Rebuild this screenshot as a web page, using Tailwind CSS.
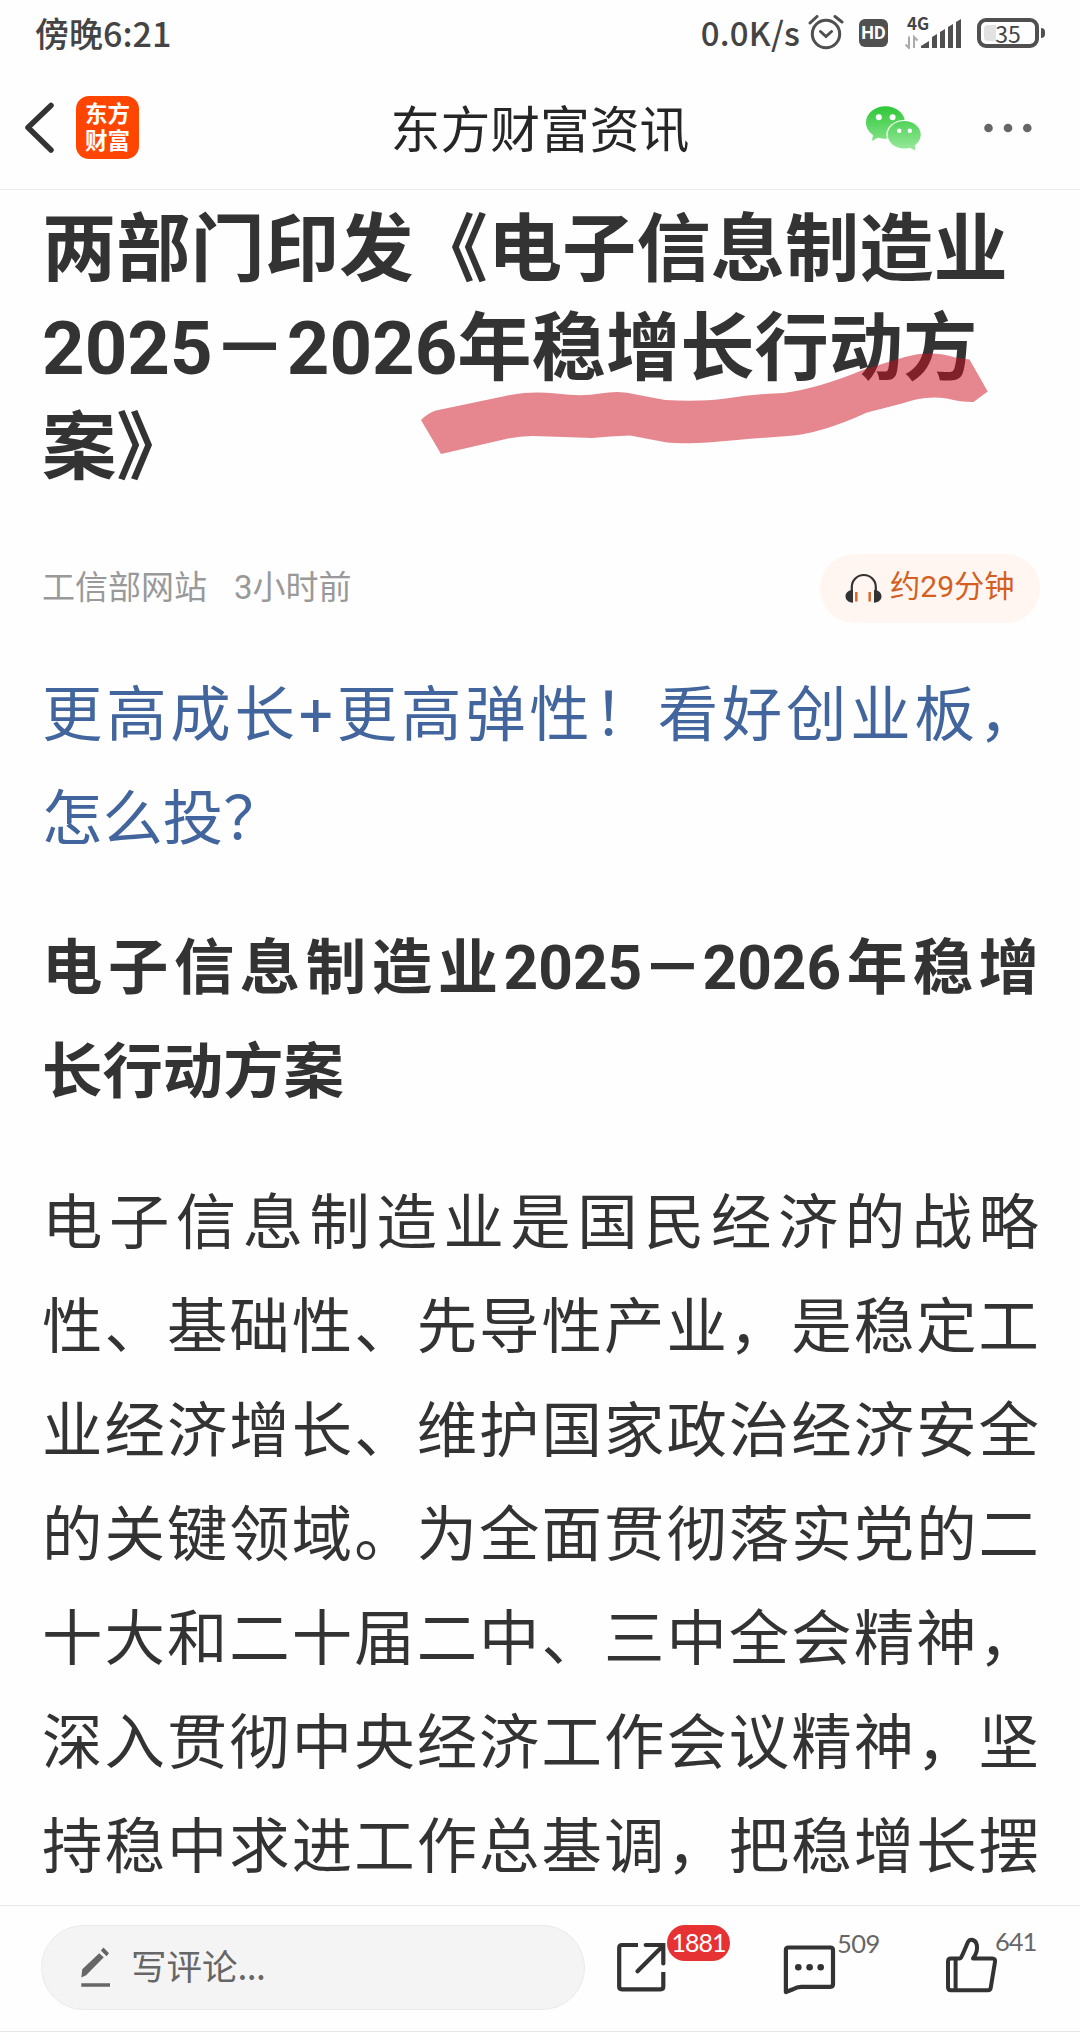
<!DOCTYPE html>
<html lang="zh-CN">
<head>
  <meta charset="UTF-8" />
  <title>东方财富资讯</title>
  <meta name="viewport" content="width=device-width, initial-scale=1.0" />
  <script src="https://cdn.jsdelivr.net/npm/@tailwindcss/browser@4"></script>
</head>
<body class="bg-[#fefefe] text-[#333] font-[Roboto,'Noto_Sans_CJK_SC',sans-serif]">
<div class="flex flex-col w-[1080px] h-[2040px] overflow-hidden">

  <!-- === STATUS BAR === -->
  <div class="flex items-center h-[66px] shrink-0 pl-[35px] pr-[35px] text-[#444] font-['Noto_Sans_CJK_SC',sans-serif] font-medium">
    <span class="text-[34px] leading-none">傍晚6:21</span>
    <span class="ml-auto pb-[2px] text-[33px] leading-none tracking-[0.2px]">0.0K/s</span>
    <svg class="ml-2 w-[36px] h-[36px]" viewBox="808 17 36 36" fill="none" stroke="#505050" stroke-width="3" stroke-linecap="round">
      <circle cx="826" cy="36" r="13.7" />
      <path d="M820.5 33.5l5.5 5 5.5-5M810 25l7-6.5M842 24l-7-5.500" />
    </svg>
    <span class="ml-[15px] flex items-center justify-center w-[29px] h-[28px] rounded-md bg-[#505050] text-white text-[18px] leading-none font-bold font-[Roboto,sans-serif]">HD</span>
    <div class="relative ml-[16px] w-[58px] h-[32px]">
      <span class="absolute left-[3px] top-0 text-[17px] leading-[12px] font-bold">4G</span>
      <svg class="w-[58px] h-[32px]" viewBox="904 16 58 32">
        <path d="M909 35.500v11.500l-3.500-3.500M914 47v-11l3.500 3.500" fill="none" stroke="#aaa" stroke-width="2" />
        <path d="M921 47v-2l8-5v7zM932 47v-11l5-3v14zM940 47v-16l5-3v19zM948 47v-21l5-3v24zM956 47v-26l5-3v29z" fill="#505050" />
      </svg>
    </div>
    <div class="ml-[15px] relative flex items-center justify-center w-[62px] h-[30px] border-4 border-[#505050] rounded-[9px]">
      <span class="absolute left-[3px] top-[3px] w-3 h-4 rounded-l-sm bg-[#e2e2e2]"></span>
      <span class="relative text-[23px] leading-none font-normal">35</span>
    </div>
    <span class="ml-[2px] w-[4px] h-[10px] rounded-r-sm bg-[#505050]"></span>
  </div>

  <!-- === NAV BAR === -->
  <div class="grid grid-cols-3 items-center h-[124px] shrink-0 border-b border-[#ebebeb] pl-[24px] pr-[48px]">
    <div class="flex items-center">
      <svg class="w-[32px] h-[54px]" viewBox="24 101 32 54" fill="none" stroke="#333" stroke-width="5.500" stroke-linecap="round" stroke-linejoin="round"><path d="M51 105.500L28 127.500l23 22.500" /></svg>
      <span class="ml-5 pb-[4px] flex flex-col items-center justify-center w-[63px] h-[63px] rounded-[13px] bg-[#ff4500] text-white text-[22.500px] leading-[27px] font-['Noto_Sans_CJK_SC',sans-serif]"><b>东方</b><b>财富</b></span>
    </div>
    <h1 class="ml-[12px] -mr-[12px] pt-[9px] text-center text-[49.800px] leading-none whitespace-nowrap text-[#262626]">东方财富资讯</h1>
    <div class="flex items-center justify-end">
      <svg class="w-[60px] h-[48px] mr-[60px]" viewBox="864 103 60 48">
        <defs><linearGradient id="wx" gradientUnits="userSpaceOnUse" x1="0" y1="105" x2="0" y2="149"><stop offset="0" stop-color="#2dc737" /><stop offset="1" stop-color="#98e99b" /></linearGradient></defs>
        <path d="M873.500 131l-1.500 9 8-4.500z" fill="url(#wx)" />
        <ellipse cx="885.400" cy="121.500" rx="19.500" ry="16.200" fill="url(#wx)" />
        <ellipse cx="904.200" cy="133.800" rx="17.800" ry="14.900" fill="#fefefe" />
        <path d="M908 146l7.500 3.500-1-7z" fill="url(#wx)" />
        <ellipse cx="904.200" cy="133.800" rx="16.500" ry="13.700" fill="url(#wx)" />
        <g fill="#fff"><circle cx="878.800" cy="116.300" r="3" /><circle cx="892.600" cy="116.300" r="3" /><circle cx="899.200" cy="129.700" r="2.200" /><circle cx="909.800" cy="129.700" r="2.200" /></g>
      </svg>
      <svg class="w-[48px] h-[10px]" viewBox="984 123 48 10" fill="#666"><circle cx="988.500" cy="128" r="4.300" /><circle cx="1008" cy="128" r="4.300" /><circle cx="1027.300" cy="128" r="4.300" /></svg>
    </div>
  </div>

  <!-- === ARTICLE === -->
  <div class="flex-1 min-h-0 overflow-hidden pl-[42px] pr-[41px] pt-[10px]">
    <div class="relative">
      <h2 class="text-[74.300px] leading-[99px] font-bold whitespace-nowrap">两部门印发《电子信息制造业<br />2025－2026年稳增长行动方<br />案》</h2>
      <!-- highlighter stroke -->
      <svg class="absolute left-[376px] top-[150px] w-[574px] h-[108px]" viewBox="418 350 574 108">
        <path fill="#cd0f1f" fill-opacity=".5" d="M421 420Q428 413 436 410.500L510 395Q532 391 556 393.500Q583 397 600 393.500Q621 390 636 394.500L665 400Q700 402 726 398.500Q755 394 784 393Q820 388 864 369.500Q885 363 905 357Q932 350 955 357.500L969.500 359.500L987.700 391.500L973.500 402Q960 402 947 398.500Q925 395 902 403.500L867 412.500Q820 434 788 436L747 439Q690 445 667 442.500L630 435.500Q610 436 592 438Q565 437 532 436Q520 436 508 438.500L441 454z" />
      </svg>
    </div>

    <div class="flex items-center h-[69px] mt-[57px]">
      <span class="pb-[2px] text-[33px] leading-none text-[#999]">工信部网站</span>
      <span class="ml-[27px] pb-[2px] text-[33px] leading-none text-[#999]">3小时前</span>
      <div class="ml-auto -mr-px flex items-center w-[220px] h-[69px] pl-[24px] rounded-full bg-[#fff5f1]">
        <svg class="w-[38px] h-[32px]" viewBox="844 573 38 32">
          <path d="M851.800 593v-6a12 12 0 0 1 24 0v6" fill="none" stroke="#333" stroke-width="2.200" />
          <path d="M853 590v12.700c-10 0-10-12.700 0-12.700zM874 590v12.700c10 0 10-12.700 0-12.700z" fill="#333" />
          <path d="M856.300 592v9.500M869.700 592v9.500" stroke="#d9682c" stroke-width="2.500" />
        </svg>
        <span class="ml-[8px] pb-[3px] text-[30.200px] leading-none text-[#d4601f]">约29分钟</span>
      </div>
    </div>

    <p class="mt-[41px] text-[60.400px] leading-[104px] text-justify text-[#41659c]">更高成长+更高弹性！看好创业板，怎么投？</p>
    <p class="mt-[45px] text-[60.400px] leading-[104px] text-justify font-bold">电子信息制造业2025－2026年稳增长行动方案</p>
    <p class="mt-[47px] text-[60.400px] leading-[104px] text-justify [text-align-last:justify]">电子信息制造业是国民经济的战略性、基础性、先导性产业，是稳定工业经济增长、维护国家政治经济安全的关键领域。为全面贯彻落实党的二十大和二十届二中、三中全会精神，深入贯彻中央经济工作会议精神，坚持稳中求进工作总基调，把稳增长摆</p>
  </div>

  <!-- === COMMENT BAR === -->
  <div class="flex items-start h-[127px] shrink-0 border-y border-[#e6e6e6] pl-[41px] pt-[19px] font-['Noto_Sans_CJK_SC',sans-serif] text-[#666]">
    <div class="flex items-center w-[544px] h-[85px] pl-[38px] rounded-full bg-[#f4f4f4] border border-[#eaeaea]">
      <svg class="w-[32px] h-[42px]" viewBox="80 1946 32 42" fill="#666"><path d="M81.300 1976.500l1-8.200 16.900-16 4.600 4-17.700 18zM103.500 1946.500l5.500 5.800-2.500 2.900-5.700-5.700zM81.300 1982.300h28.700v3.400h-28.700z" /></svg>
      <span class="ml-[19px] pb-[6px] text-[35.500px] leading-none">写评论<span class="tracking-[-0.6px]">...</span></span>
    </div>
    <div class="relative ml-[30px] mt-[14px]">
      <svg class="w-[54px] h-[54px]" viewBox="615 1939.500 54 54" fill="none" stroke="#333" stroke-width="4.200"><path d="M638 1945.500h-16q-2.800 0-2.800 2.800v38.700q0 2.800 2.800 2.800h38.500q2.800 0 2.800-2.800v-14.500" /><path d="M645.700 1945.500h17.600v18.500M637.500 1971.700l25-25" stroke-linecap="round" /></svg>
      <span class="absolute left-[52px] -top-[14px] pb-[2px] flex items-center justify-center w-[63px] h-[36px] rounded-full bg-[#e63232] text-[#fff] text-[25px] leading-none tracking-[-1px] font-[Lato,sans-serif]">1881</span>
    </div>
    <div class="relative ml-[114px] mt-[18px]">
      <svg class="w-[54px] h-[54px]" viewBox="783 1943.500 54 54" fill="none" stroke="#333" stroke-width="4.200" stroke-linejoin="round"><path d="M785.900 1992.500v-42q0-2.500 2.500-2.500h42q2.600 0 2.600 2.500v34.300q0 2.500-2.600 2.500h-29.400q-4 0-8 2.500z" /><g fill="#333" stroke="none"><circle cx="798.300" cy="1967.700" r="3.300" /><circle cx="809.600" cy="1967.700" r="3.300" /><circle cx="820.700" cy="1967.700" r="3.300" /></g></svg>
      <span class="absolute left-[54px] -top-[13px] text-[25.500px] leading-[26px] tracking-[-0.5px] font-[Lato,sans-serif]">509</span>
    </div>
    <div class="relative ml-[107px] mt-[10px]">
      <svg class="w-[56px] h-[60px]" viewBox="944 1935.500 56 60" fill="none" stroke="#333" stroke-width="4" stroke-linejoin="round"><path d="M955.600 1959v31.700M955.600 1959h-4.600q-3 0-3 3v25.700q0 3 3 3h37q2.300 0 2.700-2.300l4.300-26q.5-3.400-2.700-3.400h-19.300c3-4 4.800-9 3.800-13.500-1-5.500-6.500-7-9-2.800-2 5-4.500 11-6.800 15.500q-.5.800-1.500.8z" /></svg>
      <span class="absolute left-[51px] -top-[7px] text-[25.500px] leading-[26px] tracking-[-1px] font-[Lato,sans-serif]">641</span>
    </div>
  </div>
  <div class="h-[8px] shrink-0"></div>
</div>
</body>
</html>
